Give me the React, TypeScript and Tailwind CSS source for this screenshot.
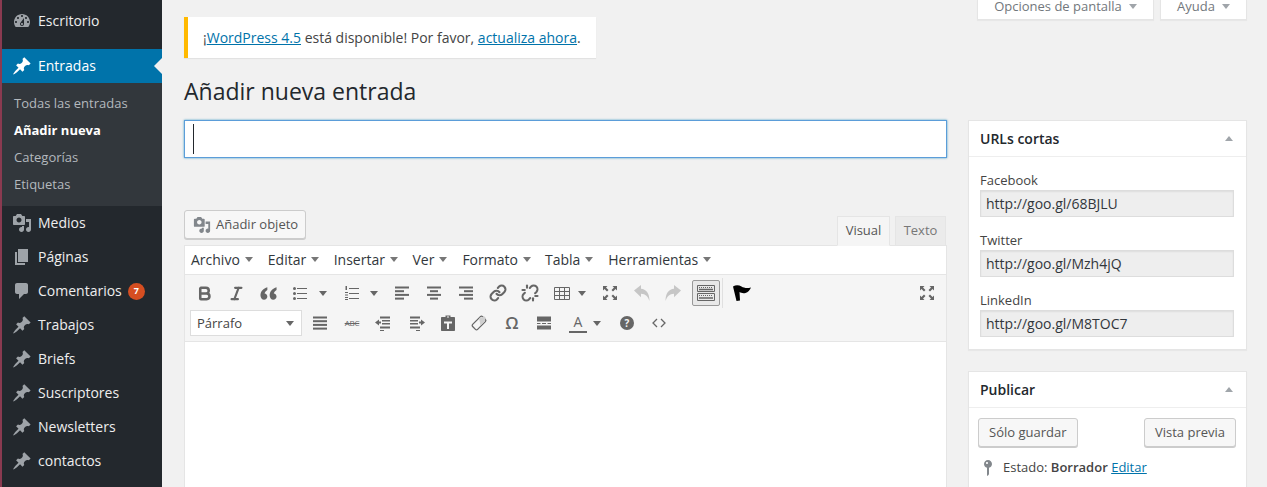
import React from "react";
import { Bold, Italic, Link, Unlink } from "lucide-react";

const P = {
  dash: "M3.76 16h12.48c1.1-1.37 1.76-3.11 1.76-5 0-4.42-3.58-8-8-8s-8 3.58-8 8c0 1.89.66 3.63 1.76 5zM10 4c.55 0 1 .45 1 1s-.45 1-1 1-1-.45-1-1 .45-1 1-1zM6 6c.55 0 1 .45 1 1s-.45 1-1 1-1-.45-1-1 .45-1 1-1zm8 0c.55 0 1 .45 1 1s-.45 1-1 1-1-.45-1-1 .45-1 1-1zm-5.37 5.55L12 7v6c0 1.1-.9 2-2 2s-2-.9-2-2c0-.57.24-1.08.63-1.45zM4 10c.55 0 1 .45 1 1s-.45 1-1 1-1-.45-1-1 .45-1 1-1zm12 0c.55 0 1 .45 1 1s-.45 1-1 1-1-.45-1-1 .45-1 1-1zm-5 3c0-.55-.45-1-1-1s-1 .45-1 1 .45 1 1 1 1-.45 1-1z",
  pin: "M10.44 3.02l1.82-1.82 6.36 6.35-1.83 1.82c-1.05-.68-2.48-.57-3.41.36l-.75.75c-.92.93-1.04 2.35-.35 3.41l-1.83 1.82-2.41-2.41-2.8 2.79c-.42.42-3.38 2.71-3.8 2.29s1.86-3.39 2.28-3.81l2.79-2.79L4.1 9.36l1.83-1.82c1.05.69 2.48.57 3.4-.36l.75-.75c.93-.92 1.05-2.35.36-3.41z",
  media: "M13 11V4c0-.55-.45-1-1-1h-1.67L9 1H5L3.67 3H2c-.55 0-1 .45-1 1v7c0 .55.45 1 1 1h10c.55 0 1-.45 1-1zM7 4.5c1.38 0 2.5 1.12 2.5 2.5S8.38 9.5 7 9.5 4.5 8.38 4.5 7 5.62 4.5 7 4.5zM14 6h5v10.5c0 1.38-1.12 2.5-2.5 2.5S14 17.88 14 16.5s1.12-2.5 2.5-2.5c.17 0 .34.02.5.05V9h-3V6zm-4 8.05V13h2v3.5c0 1.38-1.12 2.5-2.5 2.5S7 17.88 7 16.5 8.12 14 9.5 14c.17 0 .34.02.5.05z",
  page: "M6 15V2h10v13H6zm-1 1h8v2H3V5h2v11z",
  comment: "M5 2h9c1.1 0 2 .9 2 2v7c0 1.1-.9 2-2 2h-2l-5 5v-5H5c-1.1 0-2-.9-2-2V4c0-1.1.9-2 2-2z",
  status: "M14 6c0 1.86-1.28 3.41-3 3.86V16c0 1-2 2-2 2V9.86c-1.72-.45-3-2-3-3.86 0-2.21 1.79-4 4-4s4 1.79 4 4zM8 5c0 .55.45 1 1 1s1-.45 1-1-.45-1-1-1-1 .45-1 1z",
};

function Dash({ d, className = "", size = 20 }: { d: string; className?: string; size?: number }) {
  return (
    <svg viewBox="0 0 20 20" width={size} height={size} className={className} fill="currentColor">
      <path d={d} fillRule="evenodd" />
    </svg>
  );
}

function MenuRow({ icon, label, badge }: { icon: string; label: string; badge?: string }) {
  return (
    <div className="h-[34px] flex items-center text-[14px] text-[#eeeeee]">
      <Dash d={icon} className="ml-[10px] w-5 text-[#9ea3a8]" />
      <span className="ml-[6px] pb-[2px]">{label}</span>
      {badge && (
        <span className="ml-[6px] w-[17px] h-[17px] rounded-full bg-[#d54e21] text-white text-[9px] font-bold flex items-center justify-center">
          {badge}
        </span>
      )}
    </div>
  );
}

function Caret({ className = "", color = "border-t-[#72777c]" }: { className?: string; color?: string }) {
  return (
    <span
      className={`inline-block w-0 h-0 border-x-[4px] border-x-transparent border-t-[5px] ${color} ${className}`}
    />
  );
}

function Svg({ children, size = 20 }: { children: React.ReactNode; size?: number }) {
  return (
    <svg viewBox="0 0 20 20" width={size} height={size} fill="#666666">
      {children}
    </svg>
  );
}

const IQuote = () => (
  <Svg size={23}>
    <path d="M9 4.500C5.600 5.600 3 8 3 11.600 3 14 4.400 15.500 6.100 15.500c1.600 0 2.900-1.200 2.900-2.800 0-1.500-1-2.600-2.400-2.800.3-1.300 1.200-2.300 2.400-3z" />
    <path d="M17 4.500c-3.400 1.100-6 3.500-6 7.100 0 2.400 1.400 3.900 3.100 3.900 1.600 0 2.900-1.200 2.900-2.800 0-1.500-1-2.600-2.400-2.800.3-1.300 1.200-2.300 2.400-3z" />
  </Svg>
);
const IUl = () => (
  <Svg>
    <rect x="3" y="4" width="3" height="3" rx="1.5" />
    <rect x="3" y="9" width="3" height="3" rx="1.5" />
    <rect x="3" y="14" width="3" height="3" rx="1.5" />
    <rect x="7" y="5" width="10" height="1" />
    <rect x="7" y="10" width="10" height="1" />
    <rect x="7" y="15" width="10" height="1" />
  </Svg>
);
const IOl = () => (
  <Svg>
    <rect x="3.500" y="3" width="1.500" height="4" />
    <rect x="3" y="9" width="3" height="1" />
    <rect x="3" y="11.500" width="3" height="1" />
    <rect x="3" y="14" width="3" height="1" />
    <rect x="3" y="16" width="3" height="1" />
    <rect x="7" y="5" width="10" height="1" />
    <rect x="7" y="10" width="10" height="1" />
    <rect x="7" y="15" width="10" height="1" />
  </Svg>
);
const Lines = ({ rows }: { rows: [number, number][] }) => (
  <Svg>
    {rows.map(([x, w], i) => (
      <rect key={i} x={x} y={3.5 + i * 3.7} width={w} height="2" />
    ))}
  </Svg>
);
const ITable = () => (
  <svg viewBox="0 0 20 20" width="20" height="20" fill="none" stroke="#666666" strokeWidth="1">
    <path d="M2.500 4.500h15v12h-15zM2.500 8.500h15M2.500 12.500h15M7.500 4.500v12M12.500 4.500v12" />
  </svg>
);
const IFull = () => (
  <Svg>
    <path d="M3 3h4.500L6 4.500l2.500 2.500-1.500 1.500L4.500 6 3 7.500zM17 3v4.500L15.500 6 13 8.500 11.500 7 14 4.500 12.500 3zM3 17v-4.500L4.500 14 7 11.500 8.500 13 6 15.500 7.500 17zM17 17h-4.500l1.500-1.500-2.500-2.500 1.500-1.500 2.500 2.500 1.500-1.500z" />
  </Svg>
);
const IUndo = () => (
  <svg viewBox="0 0 20 20" width="20" height="20" fill="#c6c6c6">
    <path d="M2 7.500L9 2v3.700c5 .6 8.500 4.300 8.500 12.300-1.500-4.600-3.900-7-8.500-7.300v3.600z" />
  </svg>
);
const IRedo = () => (
  <svg viewBox="0 0 20 20" width="20" height="20" fill="#c6c6c6">
    <path d="M18 7.500L11 2v3.700c-5 .6-8.500 4.300-8.500 12.300 1.500-4.600 3.900-7 8.500-7.300v3.600z" />
  </svg>
);
const IKitchen = () => (
  <svg viewBox="0 0 20 20" width="20" height="20" fill="none" stroke="#666666">
    <path d="M1.500 2.500h17v6h-17zM1.500 10.500h17v7h-17z" strokeWidth="1" />
    <path d="M3 4.500h14M3 12.500h14" strokeWidth="1" strokeDasharray="1 1" />
    <path d="M3 6.500h14M3 15h14" strokeWidth="1.500" />
  </svg>
);
const IFlag = () => (
  <svg viewBox="0 0 20 20" width="20" height="20" fill="#000000">
    <path d="M1 3.500C4 1.500 7 2 9.500 3.500 12 5 15 5.500 19 4.500 18 7 16 9.500 13.500 10 11 10.500 9 10 7.500 9L8 17.500 4.500 18z" />
  </svg>
);
const IEraser = () => (
  <svg viewBox="0 0 20 20" width="20" height="20">
    <rect x="3" y="6.500" width="14" height="7" rx="1.500" transform="rotate(-45 10 10)" fill="#f5f5f5" stroke="#666666" strokeWidth="1.300" />
    <path d="M10 5l5.500 -1.500 1 1L16 8l-4.500 4.500z" fill="#cfcfcf" />
  </svg>
);
const IPaste = () => (
  <Svg>
    <path
      fillRule="evenodd"
      d="M7.500 2.500h5V4H16c.6 0 1 .4 1 1v12c0 .6-.4 1-1 1H4c-.6 0-1-.4-1-1V5c0-.6.4-1 1-1h3.500zM6 8.500v2h3V16h2v-5.500h3v-2z"
    />
    <rect x="9" y="3.500" width="2" height="1" fill="#f5f5f5" />
  </Svg>
);
const IMore = () => (
  <Svg>
    <path d="M3 3.500h14v5H3zM3 12.500h14v4H3z" />
    <path d="M3 10h3.500v1H3zM8 10h4v1H8zM13.500 10H17v1h-3.500z" />
  </Svg>
);
const IOutdent = () => (
  <Svg>
    <path d="M7 3.500h10v2H7zM9 7h8v1.500H9zM9 10h8v1.500H9zM7 13.500h10v2H7zM7 17h4v1H7z" />
    <path d="M2 9.500L6 6.500V8.500h2v2H6v2z" />
  </Svg>
);
const IIndent = () => (
  <Svg>
    <path d="M3 3.500h10v2H3zM3 7h8v1.500H3zM3 10h8v1.500H3zM3 13.500h10v2H3zM9 17h4v1H9z" />
    <path d="M18 9.500L14 6.500V8.500h-2v2h2v2z" />
  </Svg>
);
const ICode = () => (
  <svg viewBox="0 0 20 20" width="20" height="20" fill="none" stroke="#666666" strokeWidth="1.300">
    <path d="M8 6l-4 4 4 4M12 6l4 4-4 4" />
  </svg>
);

function Btn({ children, className = "" }: { children: React.ReactNode; className?: string }) {
  return <div className={`w-[28px] h-[26px] flex items-center justify-center shrink-0 ${className}`}>{children}</div>;
}

function Split({ children, w, gap }: { children: React.ReactNode; w: string; gap: string }) {
  return (
    <div className={`h-[26px] flex items-center shrink-0 pl-[4px] ${w}`}>
      {children}
      <Caret className={gap} color="border-t-[#666666]" />
    </div>
  );
}

function MenuItem({ label, className }: { label: string; className: string }) {
  return (
    <div className={`flex items-center text-[14px] text-[#32373c] shrink-0 ${className}`}>
      <span>{label}</span>
      <Caret className="ml-[5px]" color="border-t-[#777777]" />
    </div>
  );
}

function Field({ label, value }: { label: string; value: string }) {
  return (
    <div className="mb-[13px]">
      <div className="h-[20px] pt-[2px] flex items-center text-[13px] text-[#444444]">{label}</div>
      <div className="h-[27px] w-[254px] bg-[#eeeeee] border border-[#dddddd] shadow-[inset_0_1px_2px_rgba(0,0,0,0.07)] flex items-center pl-[5px] text-[14px] text-[#32373c]">
        {value}
      </div>
    </div>
  );
}

function PanelHead({ title }: { title: string }) {
  return (
    <div className="h-[36px] border-b border-[#eeeeee] flex items-center justify-between pl-[11px] pr-[13px]">
      <span className="text-[14px] font-semibold text-[#23282d]">{title}</span>
      <span className="w-0 h-0 border-x-[4px] border-x-transparent border-b-[5px] border-b-[#a0a5aa]" />
    </div>
  );
}

function WpButton({ children }: { children: React.ReactNode }) {
  return (
    <div className="h-[29px] px-[10px] flex items-center bg-[#f7f7f7] border border-[#cccccc] rounded-[3px] shadow-[0_1px_0_#cccccc] text-[13px] text-[#555555]">
      {children}
    </div>
  );
}

export default function App() {
  return (
    <div className="h-[487px] w-[1267px] overflow-hidden flex bg-[#f1f1f1] font-['Open_Sans',sans-serif] text-[#444444]">
      <aside className="w-[162px] shrink-0 bg-[#23282d] border-l-2 border-[#8a3a50] pt-[4px]">
        <div className="mb-[11px]">
          <MenuRow icon={P.dash} label="Escritorio" />
        </div>
        <div className="relative h-[34px] bg-[#0073aa] flex items-center text-[14px] text-white">
          <Dash d={P.pin} className="ml-[10px] w-5 text-white" />
          <span className="ml-[6px] pb-[2px]">Entradas</span>
          <span className="absolute right-0 top-[9px] w-0 h-0 border-y-[8px] border-y-transparent border-r-[8px] border-r-[#f1f1f1]" />
        </div>
        <div className="bg-[#32373c] pt-[7px] pb-[8px] pl-[12px] text-[13px] text-[#b4b9be]">
          <div className="h-[27px] flex items-center">Todas las entradas</div>
          <div className="h-[27px] flex items-center font-bold text-white">Añadir nueva</div>
          <div className="h-[27px] flex items-center">Categorías</div>
          <div className="h-[27px] flex items-center">Etiquetas</div>
        </div>
        <MenuRow icon={P.media} label="Medios" />
        <MenuRow icon={P.page} label="Páginas" />
        <MenuRow icon={P.comment} label="Comentarios" badge="7" />
        <MenuRow icon={P.pin} label="Trabajos" />
        <MenuRow icon={P.pin} label="Briefs" />
        <MenuRow icon={P.pin} label="Suscriptores" />
        <MenuRow icon={P.pin} label="Newsletters" />
        <MenuRow icon={P.pin} label="contactos" />
      </aside>

      <main className="w-[763px] ml-[22px] shrink-0">
        <div className="mt-[17px] w-[412px] h-[41px] bg-white border-l-4 border-[#ffb900] shadow-[0_1px_1px_rgba(0,0,0,0.06)] flex items-center pl-[15px] text-[14px]">
          <span>
            ¡<span className="text-[#0073aa] underline">WordPress 4.5</span> está disponible! Por favor,{" "}
            <span className="text-[#0073aa] underline">actualiza ahora</span>.
          </span>
        </div>
        <h1 className="mt-[17px] h-[32px] flex items-center text-[23px] text-[#23282d] leading-none">Añadir nueva entrada</h1>
        <div className="mt-[13px] h-[38px] bg-white border border-[#5b9dd9] shadow-[0_0_2px_rgba(30,140,190,0.8)] flex items-center pl-[8px]">
          <span className="w-px h-[30px] bg-[#23282d]" />
        </div>

        <div className="mt-[52px] h-[35px] flex justify-between">
          <div className="h-[29px] w-[122px] flex items-center pl-[8px] bg-[#f7f7f7] border border-[#cccccc] rounded-[3px] shadow-[0_1px_0_#cccccc] text-[13px] text-[#555555]">
            <Dash d={P.media} size={18} className="text-[#82878c]" />
            <span className="ml-[5px]">Añadir objeto</span>
          </div>
          <div className="flex items-end pr-[1px]">
            <div className="mt-[6px] h-[30px] -mb-px w-[53px] bg-[#f5f5f5] border border-[#e5e5e5] border-b-[#f5f5f5] flex items-center justify-center text-[13px] text-[#555555]">
              Visual
            </div>
            <div className="ml-[5px] h-[29px] w-[51px] bg-[#ebebeb] border border-[#e5e5e5] border-b-0 flex items-center justify-center text-[13px] text-[#777777]">
              Texto
            </div>
          </div>
        </div>

        <div className="bg-white border border-[#e5e5e5] h-[300px]">
          <div className="h-[29px] bg-white border-b border-[#e5e5e5] flex items-center pl-[6px] pb-[1px]">
            <MenuItem label="Archivo" className="mr-[15px]" />
            <MenuItem label="Editar" className="mr-[14.5px]" />
            <MenuItem label="Insertar" className="mr-[14.5px]" />
            <MenuItem label="Ver" className="mr-[15px]" />
            <MenuItem label="Formato" className="mr-[14px]" />
            <MenuItem label="Tabla" className="mr-[15px]" />
            <MenuItem label="Herramientas" className="" />
          </div>
          <div className="h-[67px] bg-[#f5f5f5] border-b border-[#e5e5e5] pl-[5px] pt-[5px]">
            <div className="h-[26px] flex items-center">
              <Btn className="mr-[4px]"><Bold size={17} strokeWidth={3.6} color="#666666" /></Btn>
              <Btn className="mr-[4px]"><Italic size={17} strokeWidth={3} color="#666666" /></Btn>
              <Btn className="mr-[4px]"><IQuote /></Btn>
              <Split w="w-[52px]" gap="ml-[9px]"><IUl /></Split>
              <Split w="w-[50px]" gap="ml-[8px]"><IOl /></Split>
              <Btn className="mr-[4px]"><Lines rows={[[3, 14], [3, 9], [3, 14], [3, 9]]} /></Btn>
              <Btn className="mr-[4px]"><Lines rows={[[3, 14], [6, 8], [3, 14], [6, 8]]} /></Btn>
              <Btn className="mr-[4px]"><Lines rows={[[3, 14], [8, 9], [3, 14], [8, 9]]} /></Btn>
              <Btn className="mr-[4px]"><Link size={18} strokeWidth={2.8} color="#666666" /></Btn>
              <Btn className="mr-[4px]"><Unlink size={18} strokeWidth={2.8} color="#666666" /></Btn>
              <Split w="w-[48px]" gap="ml-[6px]"><ITable /></Split>
              <Btn className="mr-[4px]"><IFull /></Btn>
              <Btn className="mr-[3px]"><IUndo /></Btn>
              <Btn className="mr-[5px]"><IRedo /></Btn>
              <Btn className="bg-[#e8e8e8] border border-[#999999] rounded-[2px]"><IKitchen /></Btn>
              <span className="ml-[2px] h-[30px] w-px bg-[#e0e0e0]" />
              <div className="ml-[9px]"><IFlag /></div>
              <div className="ml-[165px]"><IFull /></div>
            </div>
            <div className="h-[26px] mt-[4px] flex items-center">
              <div className="w-[112px] h-[26px] mr-[4px] bg-white border border-[#dddddd] flex items-center justify-between pl-[6px] pr-[7px] text-[13px] text-[#444444] shrink-0">
                <span className="pt-[2px]">Párrafo</span>
                <Caret color="border-t-[#666666]" />
              </div>
              <Btn className="mr-[4px]"><Lines rows={[[3, 14], [3, 14], [3, 14], [3, 14]]} /></Btn>
              <Btn className="mr-[3px]">
                <span className="text-[8px] text-[#666666] line-through tracking-tight">ABC</span>
              </Btn>
              <Btn className="mr-[6px]"><IOutdent /></Btn>
              <Btn className="mr-[3px]"><IIndent /></Btn>
              <Btn className="mr-[3px]"><IPaste /></Btn>
              <Btn className="mr-[5px]"><IEraser /></Btn>
              <Btn className="mr-[4px]"><span className="text-[17px] font-semibold text-[#666666]">Ω</span></Btn>
              <Btn className="mr-[4px]"><IMore /></Btn>
              <div className="w-[47px] h-[26px] shrink-0 flex items-center pl-[7px] mr-[4px]">
                <span className="w-[18px] h-[19px] border-b-[2px] border-[#666666] flex items-center justify-center text-[14px] leading-none text-[#666666]">A</span>
                <Caret className="ml-[6px]" color="border-t-[#666666]" />
              </div>
              <Btn className="mr-[4px]">
                <span className="w-[14px] h-[14px] rounded-full bg-[#666666] text-[#f5f5f5] text-[10px] font-bold flex items-center justify-center">?</span>
              </Btn>
              <Btn><ICode /></Btn>
            </div>
          </div>
        </div>
      </main>

      <section className="w-[279px] ml-[21px] shrink-0">
        <div className="h-[20px] flex justify-end items-stretch gap-[6px] text-[13px] leading-none text-[#72777c]">
          <div className="w-[177px] bg-white border border-t-0 border-[#e5e5e5] shadow-[0_1px_1px_rgba(0,0,0,0.04)] flex items-center justify-center gap-[7px] pb-[6px]">
            <span>Opciones de pantalla</span>
            <Caret color="border-t-[#a0a5aa]" />
          </div>
          <div className="w-[87px] bg-white border border-t-0 border-[#e5e5e5] shadow-[0_1px_1px_rgba(0,0,0,0.04)] flex items-center justify-center gap-[7px] pb-[6px]">
            <span>Ayuda</span>
            <Caret color="border-t-[#a0a5aa]" />
          </div>
        </div>

        <div className="mt-[100px] h-[230px] bg-white border border-[#e5e5e5] shadow-[0_1px_1px_rgba(0,0,0,0.04)]">
          <PanelHead title="URLs cortas" />
          <div className="pl-[11px] pt-[13px]">
            <Field label="Facebook" value="http://goo.gl/68BJLU" />
            <Field label="Twitter" value="http://goo.gl/Mzh4jQ" />
            <Field label="LinkedIn" value="http://goo.gl/M8TOC7" />
          </div>
        </div>

        <div className="mt-[21px] h-[200px] bg-white border border-[#e5e5e5] shadow-[0_1px_1px_rgba(0,0,0,0.04)]">
          <PanelHead title="Publicar" />
          <div className="pl-[9px] pr-[10px] pt-[10px]">
            <div className="flex justify-between">
              <WpButton>Sólo guardar</WpButton>
              <WpButton>Vista previa</WpButton>
            </div>
            <div className="mt-[11px] h-[20px] flex items-center text-[13px]">
              <Dash d={P.status} className="text-[#82878c]" />
              <span className="ml-[5px]">
                Estado: <b className="font-semibold">Borrador</b>{" "}
                <span className="text-[#0073aa] underline">Editar</span>
              </span>
            </div>
          </div>
        </div>
      </section>
    </div>
  );
}
